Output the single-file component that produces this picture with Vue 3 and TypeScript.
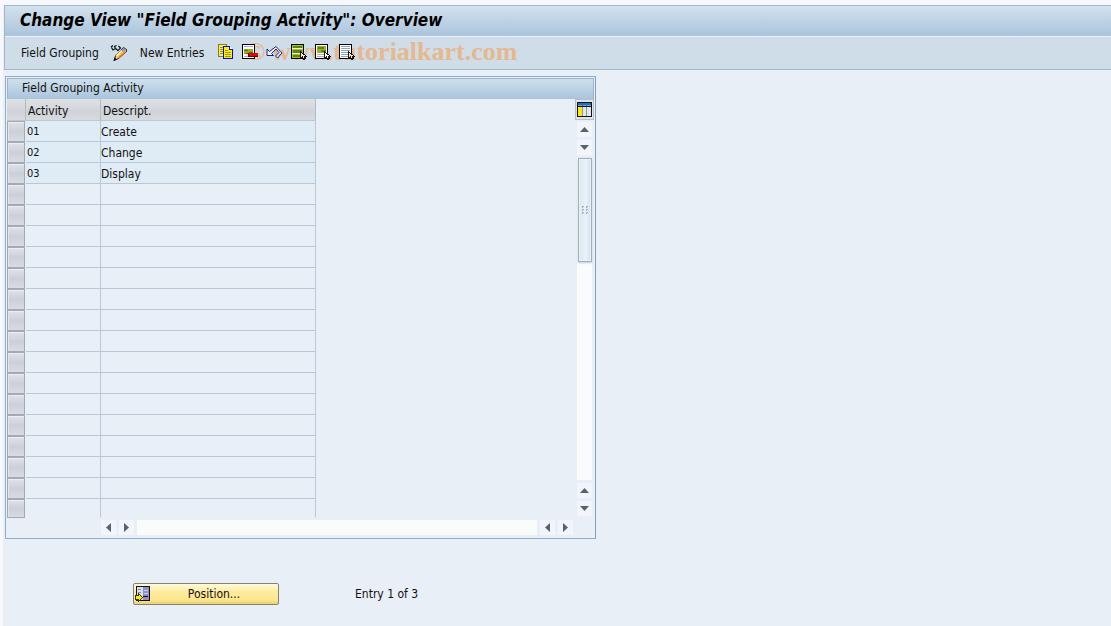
<script setup lang="ts">
import { ref } from 'vue'

interface Row {
  activity: string
  descript: string
}

const entries: Row[] = [
  { activity: '01', descript: 'Create' },
  { activity: '02', descript: 'Change' },
  { activity: '03', descript: 'Display' },
]
const emptyRows = 16
const selected = ref<number | null>(null)
</script>

<template>
  <main class="screen">
    <header class="head">
      <h1 class="title">Change View "Field Grouping Activity": Overview</h1>
      <nav class="toolbar" aria-label="Application toolbar">
        <span class="watermark">© www.tutorialkart.com</span>
        <button type="button" class="tool text">Field Grouping</button>
        <button type="button" class="tool pencil" aria-label="Display or change">
          <svg width="18" height="16" viewBox="0 0 18 16">
            <path d="M1 2L3 .5M1.500 2.500L3 5L5.500 3.500M5.500 3.500L4.500 1.500L6.500 .5M5.500 3.500L8 5.500L10.500 3L8.500 1" fill="none" stroke="#111" stroke-width="1.200" />
            <path d="M13.500 2.500L16.500 4.500V6.500L8.500 13.500L4 15.500L5.500 11Z" fill="#ffc65e" stroke="#222" stroke-width="1" />
            <path d="M13.500 3L15.500 5L13.500 7L11 5.500Z" fill="#7f9ee0" />
            <path d="M11.500 5.500L6.500 11" stroke="#fff2b8" stroke-width="1.500" />
            <path d="M15.500 6.500L8.500 12.500" stroke="#f08c20" stroke-width="1.500" />
            <path d="M3.500 16L4.500 12.500L7 14.500Z" fill="#111" />
          </svg>
        </button>
        <button type="button" class="tool text">New Entries</button>
        <div class="icons">
          <button type="button" class="tool" aria-label="Copy as">
            <svg width="16" height="16" viewBox="0 0 16 16" shape-rendering="crispEdges">
              <path d="M.5 .5H8.500V12.500H.5Z" fill="#ffef50" stroke="#897b20" />
              <path d="M2 3.500H5M2 5.500H5M2 7.500H5M2 9.500H5" stroke="#9c8d20" />
              <path d="M5.500 2.500H11.500L14.500 5.500V14.500H5.500Z" fill="#fff000" stroke="#0010df" />
              <path d="M11.500 2.500V5.500H14.500" fill="#fff" stroke="#0010df" />
              <path d="M7 6.500H10M7 8.500H13M7 10.500H13M7 12.500H13" stroke="#9b9140" />
            </svg>
          </button>
          <button type="button" class="tool" aria-label="Delete">
            <svg width="16" height="16" viewBox="0 0 16 16" shape-rendering="crispEdges">
              <path d="M.5 .5H12.500V14.500H.5Z" fill="#fff" stroke="#000" />
              <path d="M2 2.500H11M2 12.500H8" stroke="#a9a5d5" />
              <path d="M2 5H11V10H2Z" fill="#9bad18" />
              <path d="M2 6.500H6M7 8.500H11M4 9.500H7" stroke="#42720d" />
              <path d="M6 9H16V13H6Z" fill="#6b0000" />
              <path d="M7 9H16V12H7Z" fill="#f00000" />
            </svg>
          </button>
          <button type="button" class="tool" aria-label="Undo change">
            <svg width="17" height="16" viewBox="0 0 17 16">
              <path d="M1 5V11.500H7.500L5.500 9.500L10 5L13 8.500L9.500 12L11.500 14L16 9L10 2.500L3.500 7.500Z" fill="#f5f6ff" stroke="#17217c" stroke-width="1" />
              <path d="M11 4L15 8.500L11.500 12.500" fill="none" stroke="#8890b8" stroke-dasharray="1 1" />
            </svg>
          </button>
          <button type="button" class="tool" aria-label="Select all">
            <svg width="16" height="16" viewBox="0 0 16 16" shape-rendering="crispEdges">
              <path d="M.5 .5H12.500V14.500H.5Z" fill="#a8be26" stroke="#000" />
              <path d="M2 2H11V4H2ZM2 6H11V9H2ZM2 11H9V13H2Z" fill="#578518" />
              <path d="M1 4.500H12M1 9.500H12" stroke="#f3f5cf" />
              <path d="M9.500 7.500V14.500L11.500 12.500L12.500 15.500L14.500 14.500L13.500 12.500H15.500Z" fill="#ffe3cc" stroke="#171717" />
            </svg>
          </button>
          <button type="button" class="tool" aria-label="Select block">
            <svg width="16" height="16" viewBox="0 0 16 16" shape-rendering="crispEdges">
              <path d="M.5 .5H12.500V14.500H.5Z" fill="#fff" stroke="#000" />
              <path d="M2 2H11V9H2Z" fill="#9cb020" />
              <path d="M3 3H9V5H3ZM6 6H11V8H6Z" fill="#578518" />
              <path d="M2 10.500H9M2 12.500H9" stroke="#aaa7cd" />
              <path d="M9.500 7.500V14.500L11.500 12.500L12.500 15.500L14.500 14.500L13.500 12.500H15.500Z" fill="#fff9ee" stroke="#171717" />
            </svg>
          </button>
          <button type="button" class="tool" aria-label="Deselect all">
            <svg width="16" height="16" viewBox="0 0 16 16" shape-rendering="crispEdges">
              <path d="M.5 .5H12.500V14.500H.5Z" fill="#fff" stroke="#000" />
              <path d="M2 2.500H11M2 4.500H11M2 6.500H11M2 8.500H9M2 10.500H9M2 12.500H9" stroke="#8ba7bc" />
              <path d="M9.500 7.500V14.500L11.500 12.500L12.500 15.500L14.500 14.500L13.500 12.500H15.500Z" fill="#ffe3cc" stroke="#171717" />
            </svg>
          </button>
        </div>
      </nav>
    </header>

    <section class="panel" aria-labelledby="panel-title">
      <h2 id="panel-title" class="panel-title">Field Grouping Activity</h2>
      <div class="panel-body">
        <div class="grid-area">
          <table class="grid">
            <thead>
              <tr>
                <th class="sel" aria-label="Selection"></th>
                <th class="act" scope="col">Activity</th>
                <th class="desc" scope="col">Descript.</th>
              </tr>
            </thead>
            <tbody>
              <tr v-for="(row, i) in entries" :key="row.activity" class="filled">
                <td class="sel">
                  <button type="button" class="row-btn" :aria-label="'Select ' + row.descript" :aria-pressed="selected === i" @click="selected = i"></button>
                </td>
                <td class="code">{{ row.activity }}</td>
                <td>{{ row.descript }}</td>
              </tr>
              <tr v-for="n in emptyRows" :key="n">
                <td class="sel"><button type="button" class="row-btn" :aria-label="'Select empty row ' + n"></button></td>
                <td></td>
                <td></td>
              </tr>
            </tbody>
          </table>
        </div>
        <div class="side">
          <button type="button" class="config" aria-label="Configuration">
            <svg width="15" height="15" viewBox="0 0 15 15" shape-rendering="crispEdges">
              <path d="M0 0H15V15H0Z" fill="#111" />
              <path d="M1 1H14V4H1Z" fill="#1d73bd" />
              <path d="M1 3H5V4H1ZM6 3H9V4H6ZM10 3H14V4H10Z" fill="#64aae0" />
              <path d="M1 5H5V14H1Z" fill="#ffe900" />
              <path d="M6 5H9V14H6ZM10 5H14V14H10Z" fill="#e3e8ec" />
              <path d="M5 5H6V14H5ZM9 5H10V14H9Z" fill="#8598a6" />
            </svg>
          </button>
          <div class="vbar">
            <button type="button" class="arrow" aria-label="Scroll up"><svg width="9" height="5"><path d="M4.500 0L9 5H0Z" /></svg></button>
            <button type="button" class="arrow" aria-label="Page up"><svg width="9" height="5"><path d="M0 0H9L4.500 5Z" /></svg></button>
            <div class="vtrack">
              <div class="thumb">
                <svg width="6" height="8" viewBox="0 0 6 8" shape-rendering="crispEdges">
                  <path d="M0 0H2V1H1V2H0ZM4 0H6V1H5V2H4ZM0 3H2V4H1V5H0ZM4 3H6V4H5V5H4ZM0 6H2V7H1V8H0ZM4 6H6V7H5V8H4Z" />
                </svg>
              </div>
            </div>
            <button type="button" class="arrow" aria-label="Page down"><svg width="9" height="5"><path d="M4.500 0L9 5H0Z" /></svg></button>
            <button type="button" class="arrow" aria-label="Scroll down"><svg width="9" height="5"><path d="M0 0H9L4.500 5Z" /></svg></button>
          </div>
        </div>
      </div>
      <div class="hbar">
        <button type="button" class="arrow" aria-label="Scroll left"><svg width="5" height="9"><path d="M5 0V9L0 4.500Z" /></svg></button>
        <button type="button" class="arrow" aria-label="Page left"><svg width="5" height="9"><path d="M0 0V9L5 4.500Z" /></svg></button>
        <div class="htrack"></div>
        <button type="button" class="arrow" aria-label="Page right"><svg width="5" height="9"><path d="M5 0V9L0 4.500Z" /></svg></button>
        <button type="button" class="arrow" aria-label="Scroll right"><svg width="5" height="9"><path d="M0 0V9L5 4.500Z" /></svg></button>
      </div>
    </section>

    <footer class="foot">
      <button type="button" class="position">
        <svg width="16" height="16" viewBox="0 0 16 16" shape-rendering="crispEdges">
          <path d="M1.500 .5H14.500V14.500H1.500Z" fill="#d9e0ec" stroke="#111" />
          <path d="M8 1H14V14H8Z" fill="#8f91c6" />
          <path d="M3 3.500H6M3 6.500H6" stroke="#7990a8" />
          <path d="M9 4.500H13M9 7.500H13" stroke="#c9cbe8" />
          <path d="M8 10.500H13" stroke="#111" />
          <path d="M.5 9.500H3.500V7.500L7.500 11.500L3.500 15.500V13.500H.5Z" fill="#ffec00" stroke="#3a3500" />
        </svg>
        <span>Position...</span>
      </button>
      <span class="entry">Entry 1 of 3</span>
    </footer>
  </main>
</template>

<style>
body {
  background: #f7f8fc;
}
</style>

<style scoped>
* {
  box-sizing: border-box;
}

.screen {
  min-height: 100vh;
  padding: 5px 0 0 1px;
  border-left: 3px solid #f7f8fc;
  background: linear-gradient(#f7f8fc 5px, #e8eff6 5px);
  color: #111;
  font: 12px/16px "DejaVu Sans Condensed", "DejaVu Sans", sans-serif;
}

button {
  padding: 0;
  border: 0;
  background: none;
  color: inherit;
  font: inherit;
}

svg {
  display: block;
}

.head {
  border: solid #a4b8cc;
  border-width: 1px 0 1px 1px;
}

.title {
  margin: 0;
  padding: 0 15px 2px;
  border-bottom: 1px solid #eaf1f7;
  background: linear-gradient(#d2e1ed, #abc4dc);
  color: #000;
  font-size: 17px;
  font-style: italic;
  font-weight: bold;
  line-height: 28px;
}

.toolbar {
  position: relative;
  z-index: 0;
  display: flex;
  align-items: center;
  height: 32px;
  padding-left: 16px;
  background: #cfdde8;
}

.tool {
  flex: none;
}

.pencil {
  margin: 0 12px 0 11px;
}

.icons {
  display: flex;
  gap: 8px;
  margin: 0 0 2px 14px;
}

.watermark {
  position: absolute;
  z-index: -1;
  top: 0;
  left: 241px;
  color: #f3a55d;
  font: bold 26px/30px "Liberation Serif", serif;
  opacity: 0.65;
  pointer-events: none;
  white-space: nowrap;
}

.panel {
  width: 100%;
  max-width: 591px;
  margin: 6px 0 0 1px;
  padding: 1px;
  border: 1px solid #8fb0cd;
  border-right-color: #849fb8;
}

.panel-title {
  margin: 0;
  padding: 0 14px 2px;
  border: solid #9db3c8;
  border-width: 1px 1px 0;
  background: linear-gradient(#d0e0ec, #a9c4dc);
  font-size: 12px;
  font-weight: normal;
  line-height: 18px;
}

.panel-body {
  display: flex;
  justify-content: space-between;
}

.grid {
  width: 309px;
  border-collapse: separate;
  border-spacing: 0;
  table-layout: fixed;
}

.grid th,
.grid td {
  height: 21px;
  padding: 2px 0 0;
  border: solid #bcc7d6;
  border-width: 0 1px 1px 0;
  line-height: 18px;
  text-align: left;
}

.grid th {
  height: 22px;
  padding-left: 2px;
  border-right-color: #b1bac6;
  background: linear-gradient(#dfe2e4, #d0d3d9 60%, #d7dbdf);
  font-weight: normal;
}

.grid tr:last-child td {
  height: 19px;
  border-bottom-color: transparent;
}

.grid th.sel,
.grid td.sel {
  width: 19px;
  padding: 0;
  line-height: 0;
}

.grid .act {
  width: 75px;
}

.grid td.sel {
  border: 0;
}

.row-btn {
  display: block;
  width: 18px;
  height: 21px;
  border: 1px solid #a2aab8;
  background: linear-gradient(#dfe2e7, #cbd0d8 50%, #d8dbe1);
  box-shadow: inset 0 1px #eceef2, inset 1px 0 #e2e5ea;
}

.grid tr:last-child .row-btn {
  height: 19px;
}

.filled td {
  background: #dfebf5;
}

.grid .code {
  padding-left: 1px;
  font-size: 11px;
}

.side {
  display: flex;
  flex-direction: column;
  align-items: center;
  width: 19px;
}

.config {
  display: flex;
  align-items: center;
  justify-content: center;
  width: 19px;
  height: 21px;
  border: 1px solid #b7bec6;
  background: #dfe4e8;
}

.vbar {
  display: flex;
  flex: 1;
  flex-direction: column;
  gap: 3px;
  padding: 2px 1px 2px 0;
}

.arrow {
  display: flex;
  flex: none;
  align-items: center;
  justify-content: center;
  width: 15px;
  height: 15px;
  background: #f2f6fa;
  fill: #53636f;
}

.vtrack {
  flex: 1;
  background: #fafbfc;
}

.thumb {
  display: flex;
  align-items: center;
  justify-content: center;
  height: 104px;
  margin-left: 1px;
  border: 1px solid #9cafc0;
  background: linear-gradient(90deg, #dce8f2, #eaf2f8 60%, #cfdfec);
  box-shadow: inset 0 0 0 1px #eaf1f7, 0 1px 2px #c2ccd5;
  fill: #9eafbe;
}

.hbar {
  display: flex;
  gap: 3px;
  padding: 2px 21px 2px 94px;
}

.htrack {
  flex: 1;
  background: #fafbfb;
}

.foot {
  display: flex;
  align-items: center;
  gap: 76px;
  padding: 44px 0 21px 129px;
}

.position {
  display: flex;
  align-items: center;
  width: 146px;
  height: 22px;
  padding-left: 1px;
  border: 1px solid #85826e;
  border-radius: 2px;
  background: linear-gradient(#fffadf, #ffeb9e 40%, #fce78d 80%, #e9cf76);
}

.position span {
  flex: 1;
  padding-right: 1px;
  text-align: center;
}
</style>
